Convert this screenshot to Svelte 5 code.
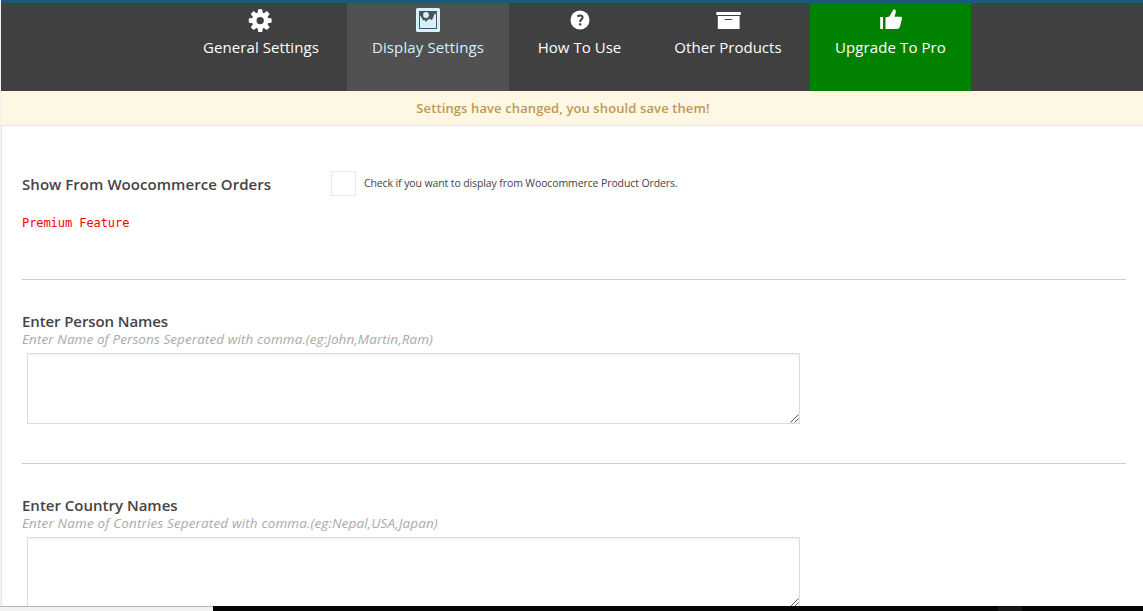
<script>
  const tabs = [
    { id: 'general', label: 'General Settings', width: 172, ls: 0.07 },
    { id: 'display', label: 'Display Settings', width: 162, ls: 0.13 },
    { id: 'help', label: 'How To Use', width: 141, ls: 0.03 },
    { id: 'other', label: 'Other Products', width: 156, ls: 0.03 },
    { id: 'pro', label: 'Upgrade To Pro', width: 161, ls: 0.1 }
  ];
  const fields = [
    { title: 'Enter Person Names', hint: 'Enter Name of Persons Seperated with comma.(eg:John,Martin,Ram)' },
    { title: 'Enter Country Names', hint: 'Enter Name of Contries Seperated with comma.(eg:Nepal,USA,Japan)' }
  ];
</script>

<div class="page">
  <div class="topline"></div>
  <nav>
    {#each tabs as tab}
      <a class="tab {tab.id}" style="width:{tab.width}px;letter-spacing:{tab.ls}px">
        <svg width="26" height="26" viewBox="0 0 26 26" fill="currentColor">
          {#if tab.id === 'general'}
            <g transform="translate(12.2 13.6)">
              <path fill-rule="evenodd" d="M-8.2 0a8.2 8.2 0 1 0 16.4 0a8.2 8.2 0 1 0-16.4 0ZM-3.7 0a3.7 3.7 0 1 0 7.4 0a3.7 3.7 0 1 0-7.4 0Z" />
              {#each [0, 45, 90, 135, 180, 225, 270, 315] as angle}
                <path transform="rotate({angle})" d="M-2.8-6.5L-2-11.4H2L2.8-6.5Z" />
              {/each}
            </g>
          {:else if tab.id === 'display'}
            <path fill-rule="evenodd" d="M2.5 1H23.5Q25 1 25 2.5V23.5Q25 25 23.5 25H2.5Q1 25 1 23.5V2.5Q1 1 2.5 1ZM4 4V22H22V4Z" />
            <path d="M5 8.5L6.6 10.5L8 13.5L9.4 12.8L10.7 15L13.2 12.6L15 12L17 13.2L18.6 9.5L20 6L21 8V21H5Z" />
            <circle cx="11" cy="8" r="2.9" />
          {:else if tab.id === 'help'}
            <circle cx="13" cy="13" r="9.5" />
            <path d="M10.4 9.6Q11.5 8.6 13.2 8.6Q15.6 8.6 15.6 10.5Q15.6 11.6 14.2 12.6Q13.2 13.3 13.2 14.9" fill="none" stroke="#404040" stroke-width="2" />
            <rect x="12.1" y="16.3" width="2.2" height="2.2" fill="#404040" />
          {:else if tab.id === 'other'}
            <path d="M1.3 5H25.8V8H1.3Z" />
            <path fill-rule="evenodd" d="M2.8 9H24.6V22H2.8ZM9.8 12V13H17.2V12Z" />
          {:else}
            <path d="M2.2 10H5V22H2.2ZM7.5 10.4L11.4 9.5L15.2 2.8Q15.9 1.8 17 2.5Q18.6 3.6 17.5 6.6L16.4 9.8H22.8Q24.3 10 24 11.5L21.9 19.8Q21.5 21.9 19.3 22H7.5Z" />
          {/if}
        </svg>
        <span>{tab.label}</span>
      </a>
    {/each}
  </nav>
  <div class="notice"><span>Settings have changed, you should save them!</span></div>
  <main>
    <section class="orders">
      <div class="name">
        <h3 class="t0">Show From Woocommerce Orders</h3>
        <code>Premium Feature</code>
      </div>
      <label><i class="check"></i><span>Check if you want to display from Woocommerce Product Orders.</span></label>
    </section>
    {#each fields as field, i}
      <section class="field">
        <h3 class="t{i + 1}">{field.title}</h3>
        <p class="p{i + 1}">{field.hint}</p>
        <div class="area">
          <textarea aria-label={field.title}></textarea>
          <svg class="grip" width="9" height="9" viewBox="0 0 9 9" stroke="#555" fill="none"><path d="M.5 8.5L8.5.5M4.5 8.5L8.5 4.5" /></svg>
        </div>
      </section>
    {/each}
  </main>
  <footer><div class="status"></div><div class="dark"><i></i></div></footer>
</div>

<style>
  :global(body) { background: #f1f1f1; overflow: hidden; }
  .page { height: 611px; display: flex; flex-direction: column; padding-left: 1px; box-sizing: border-box; overflow: hidden; font-family: "Open Sans", "Noto Sans", sans-serif; color: #444; }
  .topline { height: 3px; flex: none; background: #1b5a7d; }
  nav { height: 88px; flex: none; background: #404040; display: flex; padding-left: 174px; }
  .tab { color: #fff; display: flex; flex-direction: column; align-items: center; padding-top: 4px; box-sizing: border-box; font-size: 15px; line-height: 22px; white-space: nowrap; }
  .tab svg { display: block; margin-bottom: 3px; }
  .display { background: #515151; color: #d3f1ff; }
  .other { margin-right: 4px; }
  .pro { background: #008200; }
  .notice { height: 34px; flex: none; background: #fef7e3; border-bottom: 1px solid #e5e5e5; text-align: center; font-size: 13px; font-weight: 600; letter-spacing: .11px; line-height: 34px; color: #c09854; padding-right: 18px; }
  main { flex: 1; min-height: 0; overflow: hidden; background: #fff; border-left: 1px solid #e5e5e5; padding: 0 17px 0 20px; }
  section { border-bottom: 1px solid #ccc; box-sizing: border-box; }
  .orders { height: 154px; padding-top: 45px; display: flex; }
  .name { width: 309px; }
  h3 { margin: 0; font-size: 15px; line-height: 20px; font-weight: 600; white-space: nowrap; }
  .t0 { letter-spacing: .05px; }
  .t1 { letter-spacing: -.1px; }
  .orders h3 { padding-top: 3px; }
  code { display: block; margin-top: 21px; font: 12px/17px "DejaVu Sans Mono", monospace; letter-spacing: -.07px; color: #f00; }
  label { display: flex; align-items: flex-start; font-size: 10.5px; letter-spacing: -.11px; line-height: 24px; white-space: nowrap; }
  .check { width: 23px; height: 23px; border: 1px solid #e8e8e8; margin-right: 8px; }
  .field { height: 184px; padding-top: 31px; }
  p { margin: 0; font-size: 13.5px; line-height: 16px; font-style: italic; color: #aaa; white-space: nowrap; }
  .p1 { letter-spacing: .09px; }
  .p2 { letter-spacing: .14px; }
  .area { width: 773px; height: 71px; margin: 6px 0 0 5px; position: relative; }
  textarea { display: block; width: 100%; height: 100%; margin: 0; box-sizing: border-box; border: 1px solid #ddd; border-radius: 0; box-shadow: inset 0 1px 2px rgba(0, 0, 0, .07); resize: none; background: #fff; }
  .grip { position: absolute; right: 1px; bottom: 1px; }
  footer { height: 5px; flex: none; display: flex; margin-left: -1px; }
  .status { width: 213px; box-sizing: border-box; border-top: 1px solid #b5b5b5; background: #f2f2f2; }
  .dark { flex: 1; background: #050505; padding-left: 785px; }
  .dark i { display: block; width: 24px; height: 5px; background: #161616; }
</style>
